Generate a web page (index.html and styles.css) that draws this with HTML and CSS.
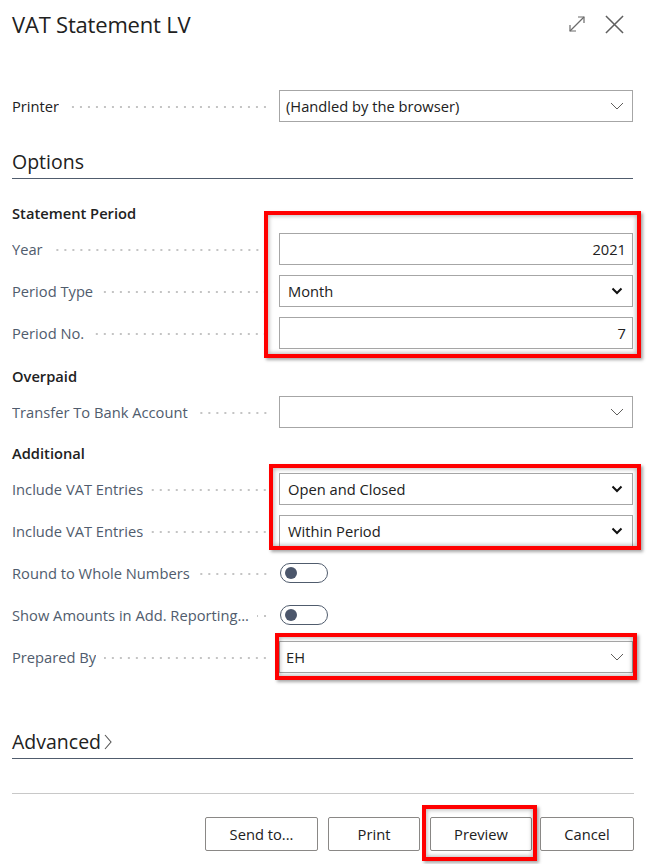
FILE: index.html
```html
<!DOCTYPE html>
<html lang="en">
<head>
<meta charset="utf-8">
<title>VAT Statement LV</title>
<link rel="stylesheet" href="styles.css">
</head>
<body>
<div class="dialog">
  <header class="header">
    <h1 class="title">VAT Statement LV</h1>
    <div class="header-icons">
      <svg class="icon-expand" width="18" height="18" viewBox="0 0 18 18" fill="none" stroke="#6b6b6b" stroke-width="1.2">
        <path d="M2 16 L16 2"/>
        <path d="M10 2 H16 V8"/>
        <path d="M2 10 V16 H8"/>
      </svg>
      <svg class="icon-close" width="19" height="19" viewBox="0 0 20 20" fill="none" stroke="#5f5f5f" stroke-width="1.6">
        <path d="M1 1 L19 19 M19 1 L1 19"/>
      </svg>
    </div>
  </header>

  <div class="row printer-row">
    <div class="label"><span class="label-text">Printer</span><span class="leader"></span></div>
    <div class="field select-thin"><span class="value">(Handled by the browser)</span><svg class="chev-thin" width="14" height="8" viewBox="0 0 14 8" fill="none" stroke="#605e5c" stroke-width="1"><path d="M1 1 L7 7 L13 1"/></svg></div>
  </div>

  <h2 class="section-heading options">Options</h2>

  <div class="group group-period">
    <div class="subhead">Statement Period</div>
    <div class="row">
      <div class="label"><span class="label-text">Year</span><span class="leader"></span></div>
      <div class="field num"><span class="value">2021</span></div>
    </div>
    <div class="row">
      <div class="label"><span class="label-text">Period Type</span><span class="leader"></span></div>
      <div class="field"><span class="value">Month</span><svg class="chev-bold" width="12" height="8" viewBox="0 0 12 8" fill="none" stroke="#111" stroke-width="2"><path d="M1.5 1.5 L6 6 L10.5 1.5"/></svg></div>
    </div>
    <div class="row">
      <div class="label"><span class="label-text">Period No.</span><span class="leader"></span></div>
      <div class="field num"><span class="value">7</span></div>
    </div>
    <div class="highlight hl-period"></div>
  </div>

  <div class="group group-overpaid">
    <div class="subhead">Overpaid</div>
    <div class="row">
      <div class="label"><span class="label-text">Transfer To Bank Account</span><span class="leader"></span></div>
      <div class="field"><span class="value"></span><svg class="chev-thin" width="14" height="8" viewBox="0 0 14 8" fill="none" stroke="#605e5c" stroke-width="1"><path d="M1 1 L7 7 L13 1"/></svg></div>
    </div>
  </div>

  <div class="group group-additional">
    <div class="subhead">Additional</div>
    <div class="row">
      <div class="label"><span class="label-text">Include VAT Entries</span><span class="leader"></span></div>
      <div class="field"><span class="value">Open and Closed</span><svg class="chev-bold" width="12" height="8" viewBox="0 0 12 8" fill="none" stroke="#111" stroke-width="2"><path d="M1.5 1.5 L6 6 L10.5 1.5"/></svg></div>
    </div>
    <div class="row">
      <div class="label"><span class="label-text">Include VAT Entries</span><span class="leader"></span></div>
      <div class="field"><span class="value">Within Period</span><svg class="chev-bold" width="12" height="8" viewBox="0 0 12 8" fill="none" stroke="#111" stroke-width="2"><path d="M1.5 1.5 L6 6 L10.5 1.5"/></svg></div>
    </div>
    <div class="row">
      <div class="label"><span class="label-text">Round to Whole Numbers</span><span class="leader"></span></div>
      <div class="toggle-cell"><span class="toggle"><span class="knob"></span></span></div>
    </div>
    <div class="row">
      <div class="label"><span class="label-text">Show Amounts in Add. Reporting...</span><span class="leader"></span></div>
      <div class="toggle-cell"><span class="toggle"><span class="knob"></span></span></div>
    </div>
    <div class="row">
      <div class="label"><span class="label-text">Prepared By</span><span class="leader"></span></div>
      <div class="field prepared"><span class="value">EH</span><svg class="chev-thin" width="14" height="8" viewBox="0 0 14 8" fill="none" stroke="#605e5c" stroke-width="1"><path d="M1 1 L7 7 L13 1"/></svg></div>
    </div>
    <div class="highlight hl-include"></div>
    <div class="highlight hl-prepared"></div>
  </div>

  <h2 class="section-heading advanced">Advanced<svg class="chev-right" width="10" height="18" viewBox="0 0 10 18" fill="none" stroke="#555" stroke-width="1.1"><path d="M2 2 L8 9 L2 16"/></svg></h2>

  <div class="footer">
    <button class="btn btn-send">Send to...</button>
    <button class="btn btn-print">Print</button>
    <button class="btn btn-preview">Preview<span class="highlight hl-preview"></span></button>
    <button class="btn btn-cancel">Cancel</button>
  </div>
</div>
</body>
</html>
```

FILE: styles.css
```css
* { box-sizing: border-box; }

html, body {
  margin: 0;
  padding: 0;
  background: #ffffff;
}

body {
  font-family: "Open Sans", "Noto Sans", "Liberation Sans", sans-serif;
  color: #212121;
  font-size: 14.7px;
}

.dialog {
  width: 651px;
  min-height: 864px;
  padding: 0 18px 0 12px;
}

.header {
  height: 48px;
  display: flex;
  align-items: center;
  justify-content: space-between;
}

.title {
  margin: 0;
  font-size: 22px;
  font-weight: 400;
  color: #212121;
  letter-spacing: -0.2px;
}

.header-icons {
  display: flex;
  align-items: center;
  gap: 19px;
  margin-right: 9px;
}

.row {
  display: grid;
  grid-template-columns: 267px 354px;
  height: 32px;
  align-items: center;
}

.printer-row {
  margin-top: 42px;
}

.label {
  display: flex;
  align-items: center;
  min-width: 0;
  padding-right: 10px;
  color: #505c6d;
  font-size: 14.7px;
}

.label-text {
  white-space: nowrap;
  overflow: hidden;
  text-overflow: ellipsis;
  flex: 0 1 auto;
}

.printer-row .label { color: #212121; }

.leader {
  flex: 1 1 auto;
  min-width: 8px;
  height: 4px;
  margin-left: 8px;
  margin-top: 2px;
  background-image: radial-gradient(circle, #c4c4c4 0.9px, transparent 1.2px);
  background-size: 8px 4px;
  background-repeat: repeat-x;
  background-position: right center;
}

.field {
  height: 32px;
  border: 1px solid #a6a6a6;
  display: flex;
  align-items: center;
  justify-content: space-between;
  padding: 0 8px 0 8px;
  color: #212121;
  background: #fff;
  font-size: 14.7px;
}

.select-thin, .prepared { padding-left: 6px; }

.field.num { justify-content: flex-end; padding-right: 6px; }

.chev-thin { margin-right: 0; }
.chev-bold { margin-right: 1px; }

.section-heading {
  margin: 0;
  font-size: 19.5px;
  font-weight: 400;
  line-height: 24px;
  padding-bottom: 4px;
  border-bottom: 1px solid #505c6d;
  color: #212121;
}

.options { margin-top: 28px; }

.advanced {
  margin-top: 57px;
  display: flex;
  align-items: center;
  gap: 2px;
}

.group {
  position: relative;
  display: flex;
  flex-direction: column;
  gap: 10px;
}

.group-period { margin-top: 24px; }
.group-overpaid { margin-top: 17px; }
.group-additional { margin-top: 15px; }

.subhead {
  height: 20px;
  line-height: 20px;
  font-weight: 600;
  font-size: 14.7px;
  color: #212121;
}

.toggle-cell {
  display: flex;
  align-items: center;
  padding-left: 1px;
}

.toggle {
  width: 48px;
  height: 20px;
  border: 1px solid #505c6d;
  border-radius: 10px;
  display: flex;
  align-items: center;
  padding-left: 4px;
}

.knob {
  width: 12px;
  height: 12px;
  border-radius: 50%;
  background: #4b566b;
}

.highlight {
  position: absolute;
  border: 4px solid #ff0000;
  box-shadow: inset 0 0 4px 1px rgba(0,0,0,0.28), 2px 2px 3px rgba(0,0,0,0.35);
  pointer-events: none;
}

.hl-period { left: 252px; top: 8px; width: 377px; height: 147px; }
.hl-include { left: 257px; top: 21px; width: 372px; height: 86px; }
.hl-prepared { left: 263px; top: 190px; width: 362px; height: 47px; }

.footer {
  margin-top: 34px;
  border-top: 1px solid #c8c8c8;
  padding-top: 23px;
  display: flex;
  justify-content: flex-end;
  gap: 10px;
  margin-right: -1px;
}

.btn {
  position: relative;
  height: 34px;
  border: 1px solid #8a8886;
  border-radius: 2px;
  background: #fff;
  font-family: inherit;
  font-size: 14.7px;
  color: #212121;
  padding: 0;
}

.btn-send { width: 113px; }
.btn-print { width: 92px; }
.btn-preview { width: 102px; margin-right: -2px; }
.btn-cancel { width: 94px; }

.hl-preview { left: -9px; top: -13px; right: -6px; bottom: -11px; }
```
